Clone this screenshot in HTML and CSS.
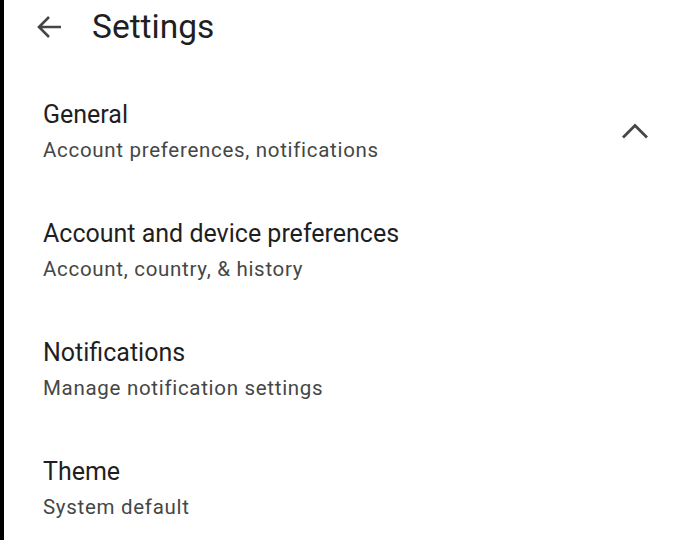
FILE: index.html
```html
<!DOCTYPE html>
<html>
<head>
<meta charset="utf-8">
<link rel="stylesheet" href="styles.css">
</head>
<body>
<div class="screen">
  <header class="topbar">
    <svg class="back" viewBox="0 0 26 24" width="26" height="24"><path d="M25 12H3M13 2L3 12l10 10" fill="none" stroke="#444746" stroke-width="2.6" stroke-linecap="butt" stroke-linejoin="miter"/></svg>
    <h1 class="title">Settings</h1>
  </header>
  <main class="list">
    <div class="row">
      <div class="text">
        <div class="row-title">General</div>
        <div class="row-sub">Account preferences, notifications</div>
      </div>
      <svg class="chev" viewBox="0 0 28 18" width="28" height="18"><path d="M2 15.5L14 3.5l12 12" fill="none" stroke="#444746" stroke-width="2.8"/></svg>
    </div>
    <div class="row">
      <div class="text">
        <div class="row-title">Account and device preferences</div>
        <div class="row-sub">Account, country, &amp; history</div>
      </div>
    </div>
    <div class="row">
      <div class="text">
        <div class="row-title">Notifications</div>
        <div class="row-sub">Manage notification settings</div>
      </div>
    </div>
    <div class="row">
      <div class="text">
        <div class="row-title">Theme</div>
        <div class="row-sub">System default</div>
      </div>
    </div>
  </main>
</div>
</body>
</html>
```
FILE: styles.css
```css
html, body {
  margin: 0;
  padding: 0;
  background: #ffffff;
}
body {
  font-family: Roboto, "Noto Sans", sans-serif;
  width: 678px;
  height: 540px;
  overflow: hidden;
}
.screen {
  border-left: 4px solid #000;
  height: 540px;
  box-sizing: border-box;
}
.topbar {
  display: flex;
  align-items: center;
  height: 54px;
  padding-left: 32px;
}
.back {
  flex: none;
}
.title {
  margin: 0 0 0 30px;
  font-size: 33.5px;
  font-weight: 400;
  color: #1f1f1f;
  line-height: 40px;
}
.list {
  display: flex;
  flex-direction: column;
  padding-top: 45px;
}
.row {
  display: flex;
  height: 119px;
  padding-left: 39px;
  padding-right: 29px;
  box-sizing: border-box;
  align-items: flex-start;
}
.text {
  flex: 1;
}
.row-title {
  font-size: 25px;
  line-height: 32px;
  color: #1f1f1f;
}
.row-sub {
  margin-top: 5px;
  font-size: 20.5px;
  letter-spacing: 0.7px;
  line-height: 28px;
  color: #444746;
}
.chev {
  flex: none;
  margin-top: 23px;
}
```
